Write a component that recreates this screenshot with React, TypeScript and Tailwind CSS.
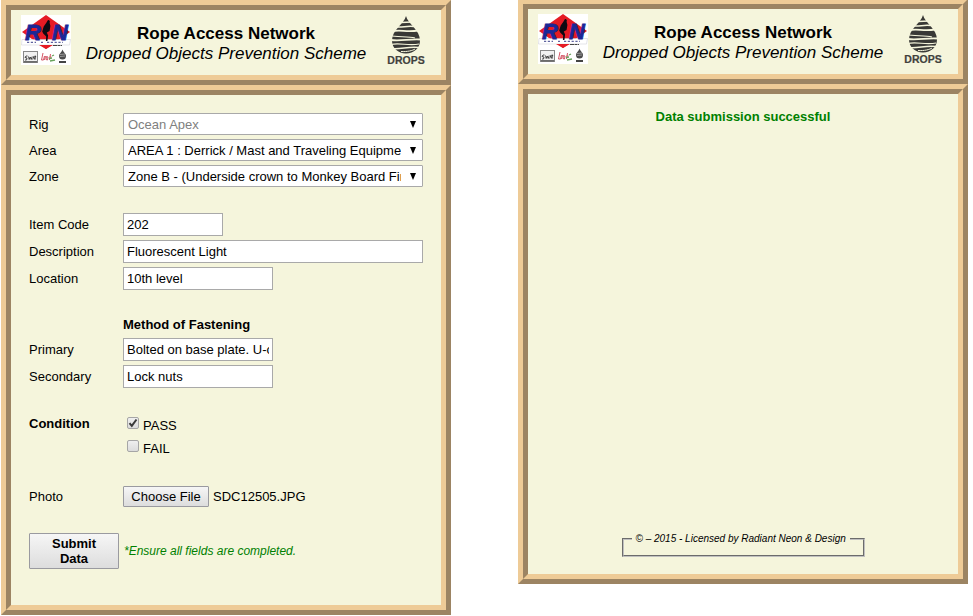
import { useState, type InputHTMLAttributes, type ReactNode } from 'react'

function Bevel({ children, className = '' }: { children: ReactNode; className?: string }) {
  return (
    <div className="border-[5px] border-t-[#eecb97] border-l-[#eecb97] border-r-[#9c8463] border-b-[#9c8463]">
      <div
        className={`border-[5px] border-t-[#9c8463] border-l-[#9c8463] border-r-[#eecb97] border-b-[#eecb97] bg-[#f5f5dc] ${className}`}
      >
        {children}
      </div>
    </div>
  )
}

function RanLogo() {
  return (
    <svg viewBox="0 0 50 50" className="size-[50px] shrink-0" role="img" aria-label="RAN logo">
      <rect width="50" height="50" fill="#fff" />
      <path d="M25 0 49 17 25 34 1 17Z" fill="#e51b24" />
      <path d="M1 24.500H49.500L48.500 30H.5Z" fill="#fff" stroke="#c9c9d2" strokeWidth=".5" />
      <path d="M18 30 25 34 32 30Z" fill="#e51b24" />
      <g fontFamily="'Liberation Sans', Arial, sans-serif" fontWeight="bold" fontStyle="italic" fill="#1b2797" stroke="#1b2797" strokeWidth=".8">
        <text x="4" y="24.500" fontSize="22">R</text>
        <text x="31" y="24.500" fontSize="22">N</text>
      </g>
      <path d="M27 5c1.800 0 2.300 1.600 1.600 2.800l.8 3.200-.8 5-2.800 1.500 1.300 3-.7 5.500h-1.500l.3-4.500-3-3-1-2 1.500-5 2.500-3.500Z" fill="#0c0a12" />
      <path d="M6 27.300h9m5 0h2m4 0h16" stroke="#6064a0" strokeWidth="1.300" strokeDasharray="2.200 1.600" />
      <path d="M32 30.500h9" stroke="#444" strokeWidth="1" strokeDasharray="4 .5 3 .5" />
      <rect x="2.500" y="36.500" width="14" height="11" fill="#f1f1f1" stroke="#888" />
      <path d="M3 46.800h13" stroke="#666" strokeWidth="1.500" />
      <path d="M6.500 41H5l-1 1.500 2 .5-.5 2H4m3.500-3.500.7 3 1-2.500 1 2.500 1-3m.5 3 1-3 1 3m.5-4v4m-.8-2.800h1.800" fill="none" stroke="#222" strokeWidth=".8" />
      <path d="m22 38-1.500 7h2m1-4-1 4m2-4-1 4m2-3.500 1.500.5-.5 3-1.500-.5Zm4-2.500-1 6m0-3h2" fill="none" stroke="#cf4456" strokeWidth=".9" />
      <path d="M28 43.500l3-.5m-2 3 5-1m-3-4 2-1" fill="none" stroke="#69a35c" strokeWidth="1.300" />
      <path d="M41.500 34.500c1 3 3.500 4 3.500 6.500a3.500 3.500 0 0 1-7 0c0-2.500 2.500-3.500 3.500-6.500Z" fill="#4b4b4b" />
      <path d="m39 39.500 5-.5m-5 2.500 5-.5" stroke="#ccc" strokeWidth=".6" />
      <path d="M38 47h7" stroke="#444" strokeWidth="2" />
    </svg>
  )
}

function DropsLogo() {
  return (
    <svg viewBox="0 0 50 50" className="size-[50px] shrink-0" role="img" aria-label="DROPS logo">
      <path d="M25 1C27 9 39 15 39 25.500c0 7.500-6 13-14 13s-14-5.500-14-13C11 15 23 9 25 1Z" fill="#393936" />
      <g fill="none" stroke="#f5f5dc" strokeWidth="1.500">
        <path d="M20 7.500 31 7" />
        <path d="M16 12c6 .5 10-1.500 17-.5" />
        <path d="M11 16.500c7-2.500 14 1 26-1" strokeWidth="1.800" />
        <path d="M9 20.500c6 2 18 .5 25 2.500" strokeWidth="1.200" />
        <path d="M10 25c10 1.500 19-1.500 30-.5" strokeWidth="1.800" />
        <path d="M10 29.500c8-2 18 1.500 28-.5" strokeWidth="1.200" />
        <path d="M11 33.500c9 1 17-2.500 27-1" />
        <path d="M20 36.500c6 .5 12-1 14-2.500" strokeWidth="1" />
      </g>
      <text
        x="25"
        y="48.500"
        textAnchor="middle"
        fontFamily="'Liberation Sans', Arial, sans-serif"
        fontSize="10.500"
        fontWeight="bold"
        fill="#41413c"
        stroke="#41413c"
        strokeWidth=".2"
      >
        DROPS
      </text>
    </svg>
  )
}

function Header() {
  return (
    <Bevel>
      <header className="flex h-[65px] items-start justify-between px-[10px] pt-[5px]">
        <RanLogo />
        <div className="pt-[9px] text-center text-[17px] leading-5 whitespace-nowrap">
          <h1 className="font-bold">Rope Access Network</h1>
          <p className="italic">Dropped Objects Prevention Scheme</p>
        </div>
        <DropsLogo />
      </header>
    </Bevel>
  )
}

function Row({ label, htmlFor, children }: { label: string; htmlFor: string; children: ReactNode }) {
  return (
    <div className="flex items-center">
      <label htmlFor={htmlFor} className="w-[94px] shrink-0">
        {label}
      </label>
      {children}
    </div>
  )
}

function SelectRow({ id, label, value, muted }: { id: string; label: string; value: string; muted?: boolean }) {
  return (
    <Row label={label} htmlFor={id}>
      <div className="relative w-[300px]">
        <select
          id={id}
          disabled={muted}
          className="block h-[22px] w-full appearance-none overflow-hidden rounded-[1px] border border-[#a9a9a9] bg-white pr-[21px] pl-1 text-black opacity-100 disabled:text-[#808080]"
        >
          <option>{value}</option>
        </select>
        <svg viewBox="0 0 6 7" className="pointer-events-none absolute top-2 right-[7px] h-[7px] w-[6px]" aria-hidden="true">
          <path d="M0 0h6L3 7Z" />
        </svg>
      </div>
    </Row>
  )
}

function TextRow({ id, label, value, width = 'w-[150px]' }: { id: string; label: string; value: string; width?: string }) {
  return (
    <Row label={label} htmlFor={id}>
      <input id={id} type="text" defaultValue={value} className={`h-[23px] border border-[#a9a9a9] bg-white px-[3px] ${width}`} />
    </Row>
  )
}

function Tick({ label, ...rest }: { label: string } & InputHTMLAttributes<HTMLInputElement>) {
  return (
    <label className="flex h-[23px] items-start gap-1">
      <span className="relative mt-[3px] block size-3">
        <input
          type="checkbox"
          className="peer block size-3 appearance-none rounded-[2px] border border-[#a6a6a6] bg-linear-to-b from-[#efefef] to-[#dcdcdc]"
          {...rest}
        />
        <svg viewBox="0 0 12 12" className="pointer-events-none absolute inset-0 hidden size-3 peer-checked:block" aria-hidden="true">
          <path d="M2.500 6.200 4.800 8.800 9.500 2.500" fill="none" stroke="#3a3a3a" strokeWidth="2" />
        </svg>
      </span>
      <span className="pt-1">{label}</span>
    </label>
  )
}

function InspectionForm() {
  const [passed, setPassed] = useState(true)
  return (
    <form className="px-[18px] pt-[18px] pb-9 text-[13px] leading-[15px]" onSubmit={(e) => e.preventDefault()}>
      <div className="flex flex-col gap-1">
        <SelectRow id="rig" label="Rig" value="Ocean Apex" muted />
        <SelectRow id="area" label="Area" value="AREA 1 : Derrick / Mast and Traveling Equipment" />
        <SelectRow id="zone" label="Zone" value="Zone B - (Underside crown to Monkey Board Fingers)" />
      </div>
      <div className="mt-[26px] flex flex-col gap-1">
        <TextRow id="code" label="Item Code" value="202" width="w-[100px]" />
        <TextRow id="description" label="Description" value="Fluorescent Light" width="w-[300px]" />
        <TextRow id="location" label="Location" value="10th level" />
      </div>
      <h2 className="mt-[27px] ml-[94px] font-bold">Method of Fastening</h2>
      <div className="mt-[6px] flex flex-col gap-1">
        <TextRow id="primary" label="Primary" value="Bolted on base plate. U-clamp" />
        <TextRow id="secondary" label="Secondary" value="Lock nuts" />
      </div>
      <div className="mt-[26px] flex">
        <div className="w-[98px] pt-[2px] font-bold">Condition</div>
        <div>
          <Tick label="PASS" checked={passed} onChange={() => setPassed(true)} />
          <Tick label="FAIL" checked={!passed} onChange={() => setPassed(false)} />
        </div>
      </div>
      <div className="relative mt-[26px] flex items-center">
        <div className="w-[94px]">Photo</div>
        <input id="photo" type="file" className="sr-only" />
        <label
          htmlFor="photo"
          className="flex h-[21px] w-[86px] items-center justify-center rounded-[1px] border border-[#9a9aa0] bg-linear-to-b from-[#f6f6f6] to-[#dddddd]"
        >
          Choose File
        </label>
        <span className="ml-1">SDC12505.JPG</span>
      </div>
      <div className="mt-[26px] flex items-center">
        <button
          type="submit"
          className="h-9 w-[90px] rounded-[1px] border border-[#9a9aa0] bg-linear-to-b from-[#f6f6f6] to-[#dddddd] px-4 font-bold"
        >
          Submit Data
        </button>
        <p className="ml-[5px] text-[12px] text-[#008000] italic">*Ensure all fields are completed.</p>
      </div>
    </form>
  )
}

export default function App() {
  return (
    <main className="flex items-start gap-[67px] overflow-hidden bg-white pl-px font-['Liberation_Sans',Arial,sans-serif] text-black">
      <section className="w-full max-w-[450px]">
        <Header />
        <Bevel>
          <InspectionForm />
        </Bevel>
      </section>
      <section className="-mt-px w-full max-w-[450px]">
        <Header />
        <Bevel className="flex min-h-[490px] flex-col items-center pt-[15px] pb-[17px]">
          <p className="text-[13px] leading-[15px] font-bold text-[#008000]">Data submission successful</p>
          <fieldset className="mt-auto h-6 w-[243px] border-2 border-[#c0c0c0] px-2 [border-style:groove]">
            <legend className="px-1 text-[10px] leading-3 whitespace-nowrap italic">
              © – 2015 - Licensed by Radiant Neon &amp; Design
            </legend>
          </fieldset>
        </Bevel>
      </section>
    </main>
  )
}
